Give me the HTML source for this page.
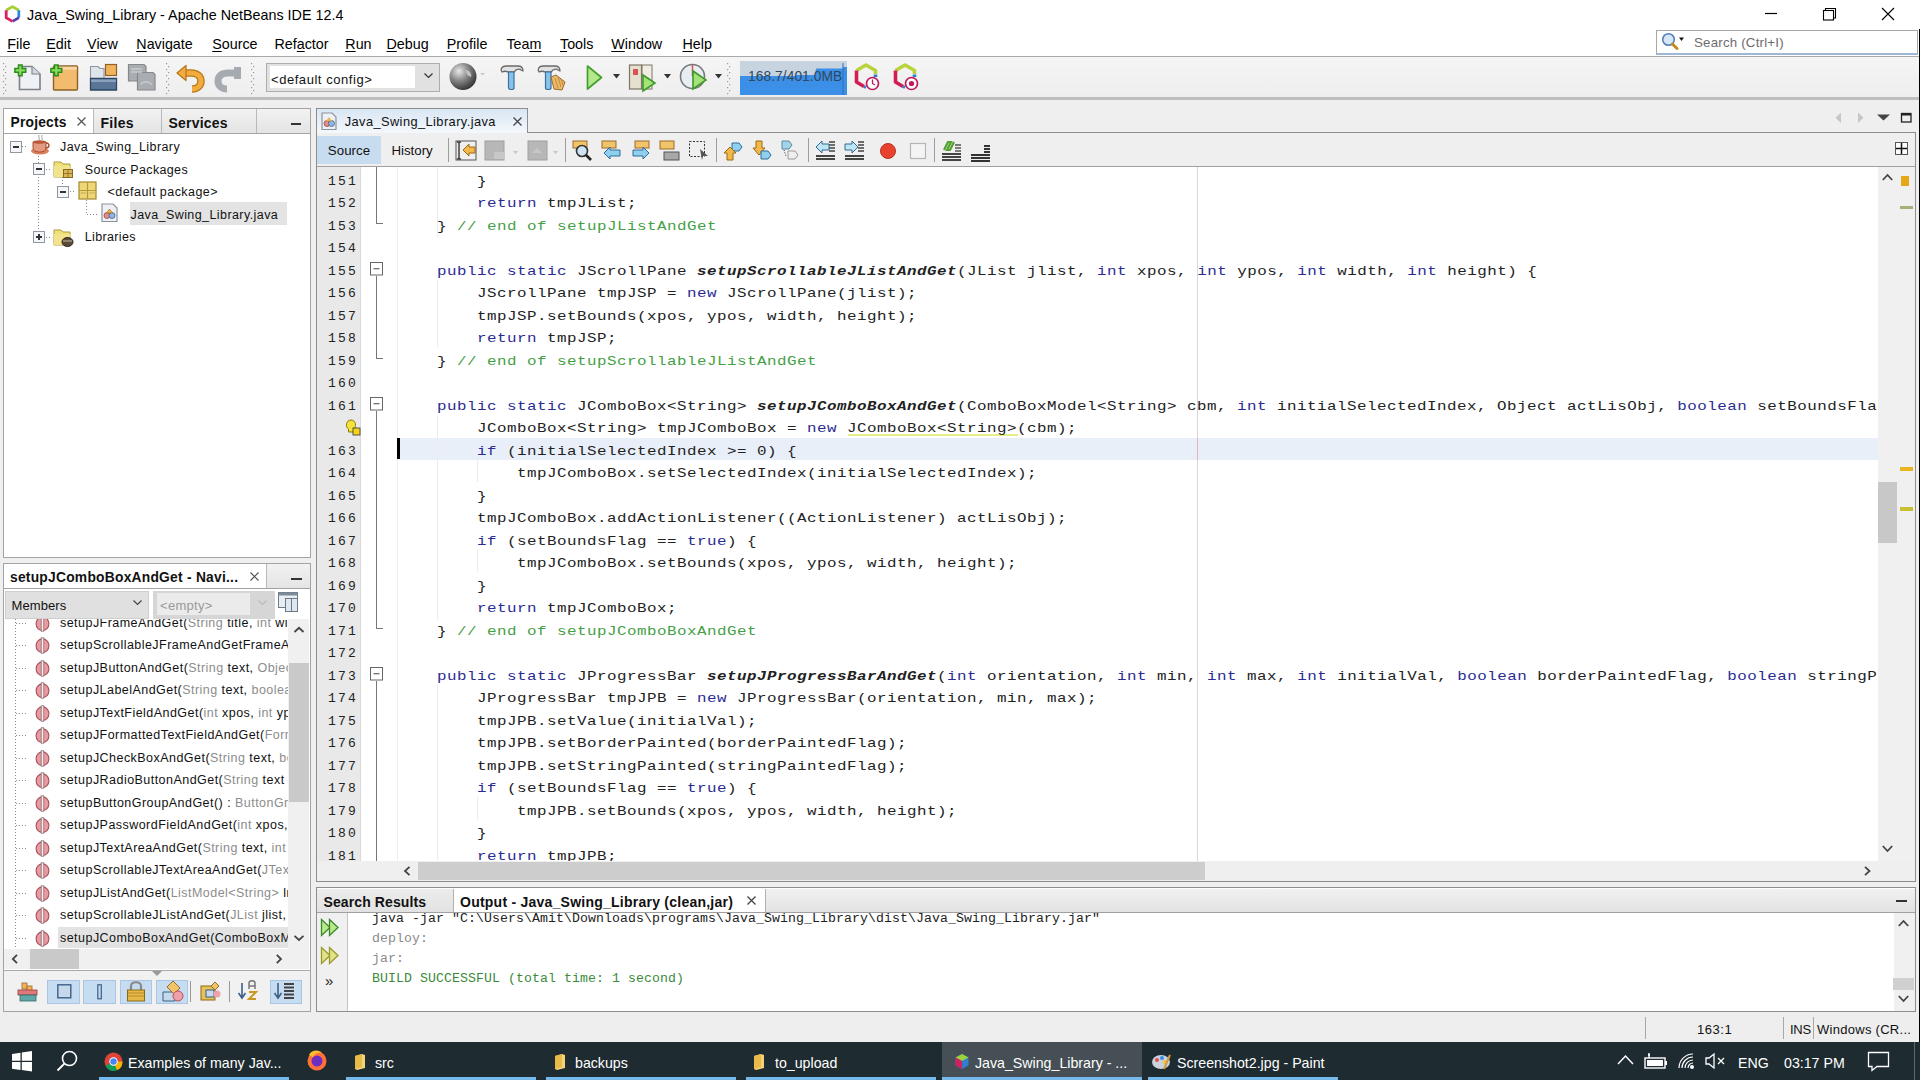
<!DOCTYPE html><html><head><meta charset="utf-8"><style>
*{margin:0;padding:0;box-sizing:border-box}
html,body{width:1920px;height:1080px;overflow:hidden;background:#efefef;position:relative;font-family:"Liberation Sans",sans-serif;}
.t{position:absolute;white-space:pre;line-height:1;}
.mono{font-family:"Liberation Mono",monospace;}
svg{position:absolute;overflow:visible}
u{text-decoration:underline;text-underline-offset:2px;text-decoration-thickness:1px}
.gr{color:#8c8c8c}
</style></head><body><div style="position:absolute;left:0px;top:0px;width:1920px;height:56px;background:#fff"></div><div style="position:absolute;left:0px;top:56px;width:1920px;height:1px;background:#a9a9a9"></div><div class="t " style="left:27px;top:7.80px;font-size:14.3px;color:#000;letter-spacing:0.02px">Java_Swing_Library - Apache NetBeans IDE 12.4</div><svg style="left:0px;top:0px" width="1920" height="30"><line x1="1765" y1="13.5" x2="1777" y2="13.5" stroke="#000" stroke-width="1.2"/><rect x="1823.5" y="10.5" width="10" height="9.5" fill="none" stroke="#000" stroke-width="1.1"/><path d="M1825.5 10.5 V8.5 H1835.5 V18 H1833.5" fill="none" stroke="#000" stroke-width="1.1"/><path d="M1882 8 L1894 20 M1894 8 L1882 20" stroke="#000" stroke-width="1.1"/></svg><svg style="left:4px;top:5px" width="17" height="18"><path d="M2.2 5.2 L8.5 1.6 L14.8 5.2" stroke="#a5cf2a" stroke-width="2.8" fill="none" stroke-linejoin="round"/><path d="M14.8 5.2 L14.8 12.8" stroke="#2a8ae0" stroke-width="2.8" fill="none"/><path d="M14.8 12.8 L8.5 16.4" stroke="#5a3fb0" stroke-width="2.8" fill="none"/><path d="M8.5 16.4 L2.2 12.8 L2.2 5.2" stroke="#d9245e" stroke-width="2.8" fill="none" stroke-linejoin="round"/></svg><div class="t " style="left:7.3px;top:37.30px;font-size:14.3px;color:#000"><u>F</u>ile</div><div class="t " style="left:46.3px;top:37.30px;font-size:14.3px;color:#000"><u>E</u>dit</div><div class="t " style="left:87.1px;top:37.30px;font-size:14.3px;color:#000"><u>V</u>iew</div><div class="t " style="left:136.3px;top:37.30px;font-size:14.3px;color:#000"><u>N</u>avigate</div><div class="t " style="left:212.2px;top:37.30px;font-size:14.3px;color:#000"><u>S</u>ource</div><div class="t " style="left:274.5px;top:37.30px;font-size:14.3px;color:#000">Ref<u>a</u>ctor</div><div class="t " style="left:345.3px;top:37.30px;font-size:14.3px;color:#000"><u>R</u>un</div><div class="t " style="left:386.5px;top:37.30px;font-size:14.3px;color:#000"><u>D</u>ebug</div><div class="t " style="left:446.8px;top:37.30px;font-size:14.3px;color:#000"><u>P</u>rofile</div><div class="t " style="left:506.4px;top:37.30px;font-size:14.3px;color:#000">Tea<u>m</u></div><div class="t " style="left:560px;top:37.30px;font-size:14.3px;color:#000"><u>T</u>ools</div><div class="t " style="left:611.3px;top:37.30px;font-size:14.3px;color:#000"><u>W</u>indow</div><div class="t " style="left:682.5px;top:37.30px;font-size:14.3px;color:#000"><u>H</u>elp</div><div style="position:absolute;left:1656px;top:30px;width:262px;height:24.5px;background:#fff;border:1px solid #a8a8a8;border-bottom:2px solid #9fb8d6"></div><div class="t " style="left:1694px;top:36.44px;font-size:13.3px;color:#6d6d6d;letter-spacing:0.2px">Search (Ctrl+I)</div><svg style="left:1660px;top:32px" width="26" height="20"><circle cx="8.5" cy="7.5" r="5.8" fill="#d4e6f7" stroke="#4f7fb0" stroke-width="1.5"/><path d="M12.5 12 L17 16.5" stroke="#c98a1a" stroke-width="3" stroke-linecap="round"/><path d="M19 5.5 L24 5.5 L21.5 9 Z" fill="#111"/></svg><div style="position:absolute;left:0px;top:57px;width:1920px;height:40px;background:linear-gradient(#f5f5f5,#eeeeee)"></div><div style="position:absolute;left:0px;top:97px;width:1920px;height:3px;background:#bdbdbd"></div><svg style="left:3px;top:63px" width="4" height="34"><rect x="0" y="0" width="1.2" height="1.2" fill="#9a9a9a"/><rect x="2" y="3" width="1.2" height="1.2" fill="#9a9a9a"/><rect x="0" y="6" width="1.2" height="1.2" fill="#9a9a9a"/><rect x="2" y="9" width="1.2" height="1.2" fill="#9a9a9a"/><rect x="0" y="12" width="1.2" height="1.2" fill="#9a9a9a"/><rect x="2" y="15" width="1.2" height="1.2" fill="#9a9a9a"/><rect x="0" y="18" width="1.2" height="1.2" fill="#9a9a9a"/><rect x="2" y="21" width="1.2" height="1.2" fill="#9a9a9a"/><rect x="0" y="24" width="1.2" height="1.2" fill="#9a9a9a"/><rect x="2" y="27" width="1.2" height="1.2" fill="#9a9a9a"/><rect x="0" y="30" width="1.2" height="1.2" fill="#9a9a9a"/></svg><svg style="left:166px;top:63px" width="4" height="34"><rect x="0" y="0" width="1.2" height="1.2" fill="#9a9a9a"/><rect x="2" y="3" width="1.2" height="1.2" fill="#9a9a9a"/><rect x="0" y="6" width="1.2" height="1.2" fill="#9a9a9a"/><rect x="2" y="9" width="1.2" height="1.2" fill="#9a9a9a"/><rect x="0" y="12" width="1.2" height="1.2" fill="#9a9a9a"/><rect x="2" y="15" width="1.2" height="1.2" fill="#9a9a9a"/><rect x="0" y="18" width="1.2" height="1.2" fill="#9a9a9a"/><rect x="2" y="21" width="1.2" height="1.2" fill="#9a9a9a"/><rect x="0" y="24" width="1.2" height="1.2" fill="#9a9a9a"/><rect x="2" y="27" width="1.2" height="1.2" fill="#9a9a9a"/><rect x="0" y="30" width="1.2" height="1.2" fill="#9a9a9a"/></svg><svg style="left:251px;top:63px" width="4" height="34"><rect x="0" y="0" width="1.2" height="1.2" fill="#9a9a9a"/><rect x="2" y="3" width="1.2" height="1.2" fill="#9a9a9a"/><rect x="0" y="6" width="1.2" height="1.2" fill="#9a9a9a"/><rect x="2" y="9" width="1.2" height="1.2" fill="#9a9a9a"/><rect x="0" y="12" width="1.2" height="1.2" fill="#9a9a9a"/><rect x="2" y="15" width="1.2" height="1.2" fill="#9a9a9a"/><rect x="0" y="18" width="1.2" height="1.2" fill="#9a9a9a"/><rect x="2" y="21" width="1.2" height="1.2" fill="#9a9a9a"/><rect x="0" y="24" width="1.2" height="1.2" fill="#9a9a9a"/><rect x="2" y="27" width="1.2" height="1.2" fill="#9a9a9a"/><rect x="0" y="30" width="1.2" height="1.2" fill="#9a9a9a"/></svg><svg style="left:727px;top:63px" width="4" height="34"><rect x="0" y="0" width="1.2" height="1.2" fill="#9a9a9a"/><rect x="2" y="3" width="1.2" height="1.2" fill="#9a9a9a"/><rect x="0" y="6" width="1.2" height="1.2" fill="#9a9a9a"/><rect x="2" y="9" width="1.2" height="1.2" fill="#9a9a9a"/><rect x="0" y="12" width="1.2" height="1.2" fill="#9a9a9a"/><rect x="2" y="15" width="1.2" height="1.2" fill="#9a9a9a"/><rect x="0" y="18" width="1.2" height="1.2" fill="#9a9a9a"/><rect x="2" y="21" width="1.2" height="1.2" fill="#9a9a9a"/><rect x="0" y="24" width="1.2" height="1.2" fill="#9a9a9a"/><rect x="2" y="27" width="1.2" height="1.2" fill="#9a9a9a"/><rect x="0" y="30" width="1.2" height="1.2" fill="#9a9a9a"/></svg><svg style="left:14px;top:63px" width="30" height="30"><path d="M5.5 3.5 H18 L26 11 V26.5 H5.5 Z" fill="#eef1f6" stroke="#7d8087" stroke-width="1.6"/><path d="M18 3.5 V11 H26" fill="#d3d9e2" stroke="#7d8087" stroke-width="1.1"/><path d="M4.5 2 h3.6 v3.6 h3.6 v3.6 h-3.6 v3.6 h-3.6 v-3.6 h-3.6 v-3.6 h3.6 z" fill="#86e060" stroke="#2f8a1c" stroke-width="1.5"/></svg><svg style="left:50px;top:63px" width="32" height="30"><rect x="3.5" y="3" width="24" height="24" rx="1" fill="#f2bb6e" stroke="#8f6128" stroke-width="1.4"/><rect x="4.2" y="3.7" width="22.6" height="3" fill="#f8d6a4"/><path d="M4.5 2 h3.6 v3.6 h3.6 v3.6 h-3.6 v3.6 h-3.6 v-3.6 h-3.6 v-3.6 h3.6 z" fill="#86e060" stroke="#2f8a1c" stroke-width="1.5"/></svg><svg style="left:89px;top:63px" width="30" height="30"><path d="M1.5 3.5 H9 L11 5.5 H15 V16 H1.5 Z" fill="#dfe4ea" stroke="#8a96a6" stroke-width="1.1"/><rect x="16.5" y="1.5" width="11" height="11" fill="#f2b35d" stroke="#8f6128" stroke-width="1.2"/><path d="M1.5 15.5 H27.5 V27 H1.5 Z" fill="#5a7696" stroke="#2e4660" stroke-width="1.3"/><path d="M2 16.5 H27 V19 H2Z" fill="#8aa2bc"/></svg><svg style="left:127px;top:63px" width="30" height="30"><path d="M1.5 1.5 H17 L19 3.5 V18 H1.5 Z" fill="#a9acb0" stroke="#85888c" stroke-width="1.2"/><path d="M10.5 9.5 H26 L28 11.5 V27 H10.5 Z" fill="#a9acb0" stroke="#85888c" stroke-width="1.2"/><path d="M4 6 H15 M4 9 H15" stroke="#c9cbce" stroke-width="1.3"/><path d="M14 22 C14 18 24 18 24 22" stroke="#c9cbce" stroke-width="1.5" fill="none"/></svg><svg style="left:176px;top:63px" width="30" height="30"><path d="M7 10 H15 C21 10 25 13 25 18 C25 23 21 26 16 26" fill="none" stroke="#b8781a" stroke-width="7.5"/><path d="M7 10 H15 C21 10 25 13 25 18 C25 23 21 26 16 26" fill="none" stroke="#f2ac3e" stroke-width="5"/><path d="M1 10 L10 2.5 V17.5 Z" fill="#f2ac3e" stroke="#b8781a" stroke-width="1.3" stroke-linejoin="round"/></svg><svg style="left:214px;top:63px" width="30" height="30"><path d="M21 10 H14 C8 10 4 13 4 18 C4 23 8 26 13 26" fill="none" stroke="#a5abb1" stroke-width="7"/><path d="M20 4 H27 V16 L20 16 Z" fill="#a5abb1"/></svg><div style="position:absolute;left:266px;top:63px;width:174px;height:29px;background:#e1e1e1;border:1px solid #adadad"></div><div style="position:absolute;left:270px;top:66px;width:145px;height:22px;background:#fff"></div><div class="t " style="left:271px;top:72.50px;font-size:13px;color:#111;letter-spacing:0.55px">&lt;default config&gt;</div><svg style="left:424px;top:73px" width="10" height="6"><path d="M0.5 0.5 L4.5 4.5 L8.5 0.5" fill="none" stroke="#333" stroke-width="1.2"/></svg><svg style="left:449px;top:62px" width="36" height="32"><defs><radialGradient id="gl" cx="35%" cy="30%" r="70%"><stop offset="0" stop-color="#e8e8e8"/><stop offset="0.5" stop-color="#8a8a8a"/><stop offset="1" stop-color="#3a3a3a"/></radialGradient></defs><circle cx="14" cy="14.5" r="13.5" fill="url(#gl)"/><path d="M17 8 C21 9 23 12 22 15 C19 14 17 12 17 8Z" fill="#cfcfcf" opacity="0.8"/><path d="M31 11 L36 11 L33.5 13.5 Z" fill="#c8c8c8"/></svg><svg style="left:499px;top:63px" width="26" height="29"><path d="M3 9 C1 6 3 3 7 3 L19 3 C22 3 24 5 24 8 L22 7 C21 6 19 6 17 7 L15 9 L9 9 C7 8 5 8 3 9 Z" fill="#e2e2e2" stroke="#6a6a6a" stroke-width="1.3" stroke-linejoin="round"/><path d="M9.5 9 H15 V25 C15 27 9.5 27 9.5 25 Z" fill="#86c3ec" stroke="#3d6f9a" stroke-width="1.2"/></svg><svg style="left:536px;top:63px" width="32" height="30"><path d="M3 9 C1 6 3 3 7 3 L19 3 C22 3 24 5 24 8 L22 7 C21 6 19 6 17 7 L15 9 L9 9 C7 8 5 8 3 9 Z" fill="#e2e2e2" stroke="#6a6a6a" stroke-width="1.3" stroke-linejoin="round"/><path d="M9.5 9 H15 V25 C15 27 9.5 27 9.5 25 Z" fill="#86c3ec" stroke="#3d6f9a" stroke-width="1.2"/><path d="M15 14 L20 12 L29 19 L26 27 L18 26 Z" fill="#eeb86a" stroke="#9a6a2b" stroke-width="1"/><path d="M19 15 L22 25 M22 14 L25 24 M25 16 L27 22" stroke="#b8863a" stroke-width="0.9"/></svg><svg style="left:585px;top:64px" width="20" height="28"><path d="M2.5 2 L16.5 13.5 L2.5 25 Z" fill="#b2e88a" stroke="#43a02e" stroke-width="1.7" stroke-linejoin="round"/></svg><svg style="left:613px;top:74px" width="8" height="6"><path d="M0 0 H7 L3.5 4.5 Z" fill="#333"/></svg><svg style="left:664px;top:74px" width="8" height="6"><path d="M0 0 H7 L3.5 4.5 Z" fill="#333"/></svg><svg style="left:715px;top:74px" width="8" height="6"><path d="M0 0 H7 L3.5 4.5 Z" fill="#333"/></svg><svg style="left:628px;top:63px" width="32" height="30"><rect x="1.5" y="2" width="12" height="24" fill="#e5e0cf" stroke="#7c7666" stroke-width="1.2"/><rect x="14" y="2" width="10" height="24" fill="#f0ece2" stroke="#7c7666" stroke-width="1"/><rect x="5" y="6" width="5" height="6" fill="#d9534f"/><path d="M15 12 L27 20 L15 28 Z" fill="#a6e27a" stroke="#3e9a2a" stroke-width="1.6"/></svg><svg style="left:679px;top:62px" width="32" height="32"><circle cx="13.5" cy="14.5" r="12" fill="#e6eef4" stroke="#777" stroke-width="1.6"/><line x1="13.5" y1="3" x2="13.5" y2="14" stroke="#d9534f" stroke-width="1.5"/><path d="M14 9 L27 18 L14 27 Z" fill="#a6e27a" stroke="#3e9a2a" stroke-width="1.6"/></svg><svg style="left:740px;top:61px" width="108" height="35"><rect x="0" y="0" width="107" height="34" fill="#c7d4e0"/><path d="M0 15 L55 15 L56 14 L75 14 L76 7.5 L103 7.5 L103 34 L0 34 Z" fill="#3b8fe6"/><rect x="103" y="6" width="4" height="28" fill="#3b8fe6"/><rect x="102.5" y="2" width="1" height="32" fill="#2a6fb8"/></svg><div class="t " style="left:748px;top:70.02px;font-size:13.8px;color:#2f4860;letter-spacing:0.05px">168.7/401.0MB</div><svg style="left:852px;top:62px" width="30" height="30"><path d="M4.5 8.5 L14 3 L23.5 8.5 L23.5 12" fill="none" stroke="#b9d43a" stroke-width="3.6" stroke-linejoin="round"/><path d="M4.5 8.5 L4.5 20 L12 24.5" fill="none" stroke="#cf1f55" stroke-width="3.6" stroke-linejoin="round"/><path d="M23.5 12.5 L23.5 15" stroke="#2a7fd4" stroke-width="3.6"/><path d="M12 24.5 L14 25.5" stroke="#2a7fd4" stroke-width="3"/><circle cx="20.5" cy="21.5" r="6" fill="#fff" stroke="#c2185b" stroke-width="1.7"/><path d="M20.5 17.5 V21.5 L23 23" stroke="#c2185b" stroke-width="1.3" fill="none"/></svg><svg style="left:891px;top:62px" width="30" height="30"><path d="M4.5 8.5 L14 3 L23.5 8.5 L23.5 12" fill="none" stroke="#b9d43a" stroke-width="3.6" stroke-linejoin="round"/><path d="M4.5 8.5 L4.5 20 L12 24.5" fill="none" stroke="#cf1f55" stroke-width="3.6" stroke-linejoin="round"/><path d="M23.5 12.5 L23.5 15" stroke="#2a7fd4" stroke-width="3.6"/><path d="M12 24.5 L14 25.5" stroke="#2a7fd4" stroke-width="3"/><circle cx="20.5" cy="21.5" r="6" fill="#fff" stroke="#c2185b" stroke-width="1.7"/><circle cx="20.5" cy="21.5" r="2.6" fill="#c2185b"/></svg><div style="position:absolute;left:0px;top:100px;width:1920px;height:912px;background:#efefef"></div><div style="position:absolute;left:3px;top:108px;width:308px;height:450px;background:#fff;border:1px solid #a3a3a3"></div><div style="position:absolute;left:4px;top:109px;width:306px;height:24px;background:linear-gradient(#f2f2f2,#e4e4e4)"></div><div style="position:absolute;left:4px;top:109px;width:89px;height:24px;background:#fff"></div><div style="position:absolute;left:3px;top:133px;width:308px;height:1px;background:#a3a3a3"></div><div style="position:absolute;left:93px;top:109px;width:1px;height:24px;background:#b9b9b9"></div><div style="position:absolute;left:161px;top:109px;width:1px;height:24px;background:#b9b9b9"></div><div style="position:absolute;left:256px;top:109px;width:1px;height:24px;background:#b9b9b9"></div><div class="t " style="left:10.6px;top:115.72px;font-size:13.8px;font-weight:bold;color:#111;letter-spacing:0.2px">Projects</div><div class="t " style="left:100.5px;top:115.55px;font-size:14px;font-weight:bold;color:#111;letter-spacing:0.3px">Files</div><div class="t " style="left:168.5px;top:115.55px;font-size:14px;font-weight:bold;color:#111;letter-spacing:0.2px">Services</div><svg style="left:77px;top:117px" width="10" height="10"><path d="M0.5 0.5 L8.5 8.5 M8.5 0.5 L0.5 8.5" stroke="#555" stroke-width="1.2"/></svg><div style="position:absolute;left:291px;top:122.5px;width:10px;height:2px;background:#333"></div><div style="position:absolute;left:38px;top:153px;width:1px;height:78px;background:repeating-linear-gradient(180deg,#8a8a8a 0 1px,transparent 1px 3px)"></div><div style="position:absolute;left:62px;top:177px;width:1px;height:9px;background:repeating-linear-gradient(180deg,#8a8a8a 0 1px,transparent 1px 3px)"></div><div style="position:absolute;left:86px;top:200px;width:1px;height:14px;background:repeating-linear-gradient(180deg,#8a8a8a 0 1px,transparent 1px 3px)"></div><div style="position:absolute;left:87px;top:214px;width:12px;height:1px;background:repeating-linear-gradient(90deg,#8a8a8a 0 1px,transparent 1px 3px)"></div><div style="position:absolute;left:22px;top:146px;width:6px;height:1px;background:repeating-linear-gradient(90deg,#8a8a8a 0 1px,transparent 1px 3px)"></div><div style="position:absolute;left:46px;top:169px;width:6px;height:1px;background:repeating-linear-gradient(90deg,#8a8a8a 0 1px,transparent 1px 3px)"></div><div style="position:absolute;left:70px;top:191px;width:6px;height:1px;background:repeating-linear-gradient(90deg,#8a8a8a 0 1px,transparent 1px 3px)"></div><div style="position:absolute;left:46px;top:237px;width:6px;height:1px;background:repeating-linear-gradient(90deg,#8a8a8a 0 1px,transparent 1px 3px)"></div><svg style="left:10px;top:141px" width="12" height="12"><rect x="0.5" y="0.5" width="11" height="11" fill="#f4f6f9" stroke="#8f96a0"/><rect x="3" y="5" width="6" height="2" fill="#333"/></svg><svg style="left:33px;top:163px" width="12" height="12"><rect x="0.5" y="0.5" width="11" height="11" fill="#f4f6f9" stroke="#8f96a0"/><rect x="3" y="5" width="6" height="2" fill="#333"/></svg><svg style="left:57px;top:185.5px" width="12" height="12"><rect x="0.5" y="0.5" width="11" height="11" fill="#f4f6f9" stroke="#8f96a0"/><rect x="3" y="5" width="6" height="2" fill="#333"/></svg><svg style="left:33px;top:231px" width="12" height="12"><rect x="0.5" y="0.5" width="11" height="11" fill="#f4f6f9" stroke="#8f96a0"/><rect x="3" y="5" width="6" height="2" fill="#333"/><rect x="5" y="3" width="2" height="6" fill="#333"/></svg><svg style="left:30px;top:134px" width="22" height="22"><path d="M9 1 C8 3 10 4 9 6 M12 1 C11 3 13 4 12 6" stroke="#9a9a9a" stroke-width="1" fill="none"/><ellipse cx="10" cy="17" rx="9" ry="3.5" fill="#d9805f"/><path d="M3 8 H16 V13 C16 17 13 18 9.5 18 C6 18 3 17 3 13 Z" fill="#e49a7f" stroke="#a8492a" stroke-width="1"/><ellipse cx="9.5" cy="8" rx="6.5" ry="1.8" fill="#b85a3a"/><path d="M16 9 C20 9 20 14 15.5 14" stroke="#a8492a" stroke-width="1.4" fill="none"/></svg><svg style="left:53px;top:160px" width="22" height="20"><path d="M1 2 H8 L10 4 H17 V17 H1 Z" fill="#efe07a" stroke="#b09a3a" stroke-width="1"/><rect x="1" y="6" width="16" height="11" fill="#f2e38c"/><rect x="10.5" y="9.5" width="9" height="8" fill="#d9b65a" stroke="#8a6a22" stroke-width="1"/><path d="M15 10 V17 M11 13.5 H19" stroke="#8a6a22" stroke-width="0.8"/></svg><svg style="left:78px;top:181px" width="20" height="19"><rect x="1" y="1" width="17" height="17" fill="#f0d678" stroke="#9f8a2e" stroke-width="1.2"/><path d="M9.5 1 V18 M1 9.5 H18" stroke="#b39a3a" stroke-width="1.2"/><rect x="2.5" y="11" width="5.5" height="2" fill="#d8c066"/><rect x="11" y="11" width="5.5" height="2" fill="#d8c066"/></svg><svg style="left:101px;top:203px" width="18" height="20"><path d="M1 1 H12 L16 5 V18.5 H1 Z" fill="#eef0f5" stroke="#8d939c" stroke-width="1.2"/><circle cx="6" cy="12.5" r="3" fill="#e88b8b" stroke="#8b4a4a" stroke-width="0.8"/><circle cx="11" cy="12.5" r="3" fill="#8fb6e3" stroke="#3d5f88" stroke-width="0.8"/><path d="M8.5 6 L11.5 10 H5.5 Z" fill="#f0b34a" stroke="#9a6a12" stroke-width="0.6"/></svg><svg style="left:53px;top:228px" width="22" height="20"><path d="M1 2 H8 L10 4 H17 V17 H1 Z" fill="#efe07a" stroke="#b09a3a" stroke-width="1"/><rect x="1" y="6" width="16" height="11" fill="#f2e38c"/><ellipse cx="14.5" cy="14" rx="5.5" ry="4.5" fill="#5a4a3a" stroke="#2a2018"/><path d="M10 13 H19" stroke="#c8b8a0" stroke-width="1"/></svg><div style="position:absolute;left:130px;top:202px;width:157px;height:22.7px;background:#e3e3e3"></div><div class="t " style="left:60px;top:141.42px;font-size:12.5px;color:#111;letter-spacing:0.42px">Java_Swing_Library</div><div class="t " style="left:84.8px;top:164.12px;font-size:12.5px;color:#111;letter-spacing:0.35px">Source Packages</div><div class="t " style="left:107.5px;top:186.22px;font-size:12.5px;color:#111;letter-spacing:0.45px">&lt;default package&gt;</div><div class="t " style="left:130.5px;top:208.72px;font-size:12.5px;color:#111;letter-spacing:0.42px">Java_Swing_Library.java</div><div class="t " style="left:84.8px;top:231.22px;font-size:12.5px;color:#111;letter-spacing:0.35px">Libraries</div><div style="position:absolute;left:3px;top:563px;width:308px;height:449px;background:#fff;border:1px solid #a3a3a3"></div><div style="position:absolute;left:4px;top:564px;width:306px;height:24px;background:linear-gradient(#f2f2f2,#e4e4e4)"></div><div style="position:absolute;left:4px;top:564px;width:262px;height:24px;background:#fff"></div><div style="position:absolute;left:3px;top:588px;width:308px;height:1px;background:#a3a3a3"></div><div style="position:absolute;left:266px;top:564px;width:1px;height:24px;background:#b9b9b9"></div><div class="t " style="left:10px;top:570.82px;font-size:13.8px;font-weight:bold;color:#111;letter-spacing:0.25px">setupJComboBoxAndGet - Navi...</div><svg style="left:250px;top:572px" width="10" height="10"><path d="M0.5 0.5 L8.5 8.5 M8.5 0.5 L0.5 8.5" stroke="#555" stroke-width="1.2"/></svg><div style="position:absolute;left:291px;top:578px;width:11px;height:2px;background:#333"></div><div style="position:absolute;left:4px;top:619px;width:284px;height:330px;overflow:hidden"><div style="position:absolute;left:11px;top:0px;width:1px;height:330px;background:repeating-linear-gradient(180deg,#8a8a8a 0 1px,transparent 1px 3px)"></div><div style="position:absolute;left:12px;top:3.5px;width:11px;height:1px;background:repeating-linear-gradient(90deg,#8a8a8a 0 1px,transparent 1px 3px)"></div><svg style="left:31px;top:-4.5px" width="16" height="17"><ellipse cx="7.5" cy="8.7" rx="6.4" ry="6.8" fill="#e99aa2" stroke="#a8505a" stroke-width="1.1"/><rect x="6.2" y="0.8" width="2.6" height="15.4" fill="#fbeef0" stroke="#8a6a6e" stroke-width="0.8"/></svg><div class="t" style="left:56px;top:-2.28px;font-size:12.5px;letter-spacing:0.46px;color:#111">setupJFrameAndGet(<span class="gr">String</span> title, <span class="gr">int</span> width, int height</div><div style="position:absolute;left:12px;top:26.0px;width:11px;height:1px;background:repeating-linear-gradient(90deg,#8a8a8a 0 1px,transparent 1px 3px)"></div><svg style="left:31px;top:18.0px" width="16" height="17"><ellipse cx="7.5" cy="8.7" rx="6.4" ry="6.8" fill="#e99aa2" stroke="#a8505a" stroke-width="1.1"/><rect x="6.2" y="0.8" width="2.6" height="15.4" fill="#fbeef0" stroke="#8a6a6e" stroke-width="0.8"/></svg><div class="t" style="left:56px;top:20.22px;font-size:12.5px;letter-spacing:0.46px;color:#111">setupScrollableJFrameAndGetFrameAndGet</div><div style="position:absolute;left:12px;top:48.5px;width:11px;height:1px;background:repeating-linear-gradient(90deg,#8a8a8a 0 1px,transparent 1px 3px)"></div><svg style="left:31px;top:40.5px" width="16" height="17"><ellipse cx="7.5" cy="8.7" rx="6.4" ry="6.8" fill="#e99aa2" stroke="#a8505a" stroke-width="1.1"/><rect x="6.2" y="0.8" width="2.6" height="15.4" fill="#fbeef0" stroke="#8a6a6e" stroke-width="0.8"/></svg><div class="t" style="left:56px;top:42.72px;font-size:12.5px;letter-spacing:0.46px;color:#111">setupJButtonAndGet(<span class="gr">String</span> text, <span class="gr">Object</span> actLisObj</div><div style="position:absolute;left:12px;top:71.0px;width:11px;height:1px;background:repeating-linear-gradient(90deg,#8a8a8a 0 1px,transparent 1px 3px)"></div><svg style="left:31px;top:63.0px" width="16" height="17"><ellipse cx="7.5" cy="8.7" rx="6.4" ry="6.8" fill="#e99aa2" stroke="#a8505a" stroke-width="1.1"/><rect x="6.2" y="0.8" width="2.6" height="15.4" fill="#fbeef0" stroke="#8a6a6e" stroke-width="0.8"/></svg><div class="t" style="left:56px;top:65.22px;font-size:12.5px;letter-spacing:0.46px;color:#111">setupJLabelAndGet(<span class="gr">String</span> text, <span class="gr">boolean</span> flag</div><div style="position:absolute;left:12px;top:93.5px;width:11px;height:1px;background:repeating-linear-gradient(90deg,#8a8a8a 0 1px,transparent 1px 3px)"></div><svg style="left:31px;top:85.5px" width="16" height="17"><ellipse cx="7.5" cy="8.7" rx="6.4" ry="6.8" fill="#e99aa2" stroke="#a8505a" stroke-width="1.1"/><rect x="6.2" y="0.8" width="2.6" height="15.4" fill="#fbeef0" stroke="#8a6a6e" stroke-width="0.8"/></svg><div class="t" style="left:56px;top:87.72px;font-size:12.5px;letter-spacing:0.46px;color:#111">setupJTextFieldAndGet(<span class="gr">int</span> xpos, <span class="gr">int</span> ypos</div><div style="position:absolute;left:12px;top:116.0px;width:11px;height:1px;background:repeating-linear-gradient(90deg,#8a8a8a 0 1px,transparent 1px 3px)"></div><svg style="left:31px;top:108.0px" width="16" height="17"><ellipse cx="7.5" cy="8.7" rx="6.4" ry="6.8" fill="#e99aa2" stroke="#a8505a" stroke-width="1.1"/><rect x="6.2" y="0.8" width="2.6" height="15.4" fill="#fbeef0" stroke="#8a6a6e" stroke-width="0.8"/></svg><div class="t" style="left:56px;top:110.22px;font-size:12.5px;letter-spacing:0.46px;color:#111">setupJFormattedTextFieldAndGet(<span class="gr">Format</span></div><div style="position:absolute;left:12px;top:138.5px;width:11px;height:1px;background:repeating-linear-gradient(90deg,#8a8a8a 0 1px,transparent 1px 3px)"></div><svg style="left:31px;top:130.5px" width="16" height="17"><ellipse cx="7.5" cy="8.7" rx="6.4" ry="6.8" fill="#e99aa2" stroke="#a8505a" stroke-width="1.1"/><rect x="6.2" y="0.8" width="2.6" height="15.4" fill="#fbeef0" stroke="#8a6a6e" stroke-width="0.8"/></svg><div class="t" style="left:56px;top:132.72px;font-size:12.5px;letter-spacing:0.46px;color:#111">setupJCheckBoxAndGet(<span class="gr">String</span> text, <span class="gr">boolean</span></div><div style="position:absolute;left:12px;top:161.0px;width:11px;height:1px;background:repeating-linear-gradient(90deg,#8a8a8a 0 1px,transparent 1px 3px)"></div><svg style="left:31px;top:153.0px" width="16" height="17"><ellipse cx="7.5" cy="8.7" rx="6.4" ry="6.8" fill="#e99aa2" stroke="#a8505a" stroke-width="1.1"/><rect x="6.2" y="0.8" width="2.6" height="15.4" fill="#fbeef0" stroke="#8a6a6e" stroke-width="0.8"/></svg><div class="t" style="left:56px;top:155.22px;font-size:12.5px;letter-spacing:0.46px;color:#111">setupJRadioButtonAndGet(<span class="gr">String</span> text</div><div style="position:absolute;left:12px;top:183.5px;width:11px;height:1px;background:repeating-linear-gradient(90deg,#8a8a8a 0 1px,transparent 1px 3px)"></div><svg style="left:31px;top:175.5px" width="16" height="17"><ellipse cx="7.5" cy="8.7" rx="6.4" ry="6.8" fill="#e99aa2" stroke="#a8505a" stroke-width="1.1"/><rect x="6.2" y="0.8" width="2.6" height="15.4" fill="#fbeef0" stroke="#8a6a6e" stroke-width="0.8"/></svg><div class="t" style="left:56px;top:177.72px;font-size:12.5px;letter-spacing:0.46px;color:#111">setupButtonGroupAndGet() : <span class="gr">ButtonGroup</span></div><div style="position:absolute;left:12px;top:206.0px;width:11px;height:1px;background:repeating-linear-gradient(90deg,#8a8a8a 0 1px,transparent 1px 3px)"></div><svg style="left:31px;top:198.0px" width="16" height="17"><ellipse cx="7.5" cy="8.7" rx="6.4" ry="6.8" fill="#e99aa2" stroke="#a8505a" stroke-width="1.1"/><rect x="6.2" y="0.8" width="2.6" height="15.4" fill="#fbeef0" stroke="#8a6a6e" stroke-width="0.8"/></svg><div class="t" style="left:56px;top:200.22px;font-size:12.5px;letter-spacing:0.46px;color:#111">setupJPasswordFieldAndGet(<span class="gr">int</span> xpos, </div><div style="position:absolute;left:12px;top:228.5px;width:11px;height:1px;background:repeating-linear-gradient(90deg,#8a8a8a 0 1px,transparent 1px 3px)"></div><svg style="left:31px;top:220.5px" width="16" height="17"><ellipse cx="7.5" cy="8.7" rx="6.4" ry="6.8" fill="#e99aa2" stroke="#a8505a" stroke-width="1.1"/><rect x="6.2" y="0.8" width="2.6" height="15.4" fill="#fbeef0" stroke="#8a6a6e" stroke-width="0.8"/></svg><div class="t" style="left:56px;top:222.72px;font-size:12.5px;letter-spacing:0.46px;color:#111">setupJTextAreaAndGet(<span class="gr">String</span> text, <span class="gr">int</span></div><div style="position:absolute;left:12px;top:251.0px;width:11px;height:1px;background:repeating-linear-gradient(90deg,#8a8a8a 0 1px,transparent 1px 3px)"></div><svg style="left:31px;top:243.0px" width="16" height="17"><ellipse cx="7.5" cy="8.7" rx="6.4" ry="6.8" fill="#e99aa2" stroke="#a8505a" stroke-width="1.1"/><rect x="6.2" y="0.8" width="2.6" height="15.4" fill="#fbeef0" stroke="#8a6a6e" stroke-width="0.8"/></svg><div class="t" style="left:56px;top:245.22px;font-size:12.5px;letter-spacing:0.46px;color:#111">setupScrollableJTextAreaAndGet(<span class="gr">JTextArea</span></div><div style="position:absolute;left:12px;top:273.5px;width:11px;height:1px;background:repeating-linear-gradient(90deg,#8a8a8a 0 1px,transparent 1px 3px)"></div><svg style="left:31px;top:265.5px" width="16" height="17"><ellipse cx="7.5" cy="8.7" rx="6.4" ry="6.8" fill="#e99aa2" stroke="#a8505a" stroke-width="1.1"/><rect x="6.2" y="0.8" width="2.6" height="15.4" fill="#fbeef0" stroke="#8a6a6e" stroke-width="0.8"/></svg><div class="t" style="left:56px;top:267.72px;font-size:12.5px;letter-spacing:0.46px;color:#111">setupJListAndGet(<span class="gr">ListModel&lt;String&gt;</span> lm</div><div style="position:absolute;left:12px;top:296.0px;width:11px;height:1px;background:repeating-linear-gradient(90deg,#8a8a8a 0 1px,transparent 1px 3px)"></div><svg style="left:31px;top:288.0px" width="16" height="17"><ellipse cx="7.5" cy="8.7" rx="6.4" ry="6.8" fill="#e99aa2" stroke="#a8505a" stroke-width="1.1"/><rect x="6.2" y="0.8" width="2.6" height="15.4" fill="#fbeef0" stroke="#8a6a6e" stroke-width="0.8"/></svg><div class="t" style="left:56px;top:290.22px;font-size:12.5px;letter-spacing:0.46px;color:#111">setupScrollableJListAndGet(<span class="gr">JList</span> jlist, <span class="gr">int</span></div><div style="position:absolute;left:54px;top:307.5px;width:236px;height:21px;background:#e3e3e3"></div><div style="position:absolute;left:12px;top:318.5px;width:11px;height:1px;background:repeating-linear-gradient(90deg,#8a8a8a 0 1px,transparent 1px 3px)"></div><svg style="left:31px;top:310.5px" width="16" height="17"><ellipse cx="7.5" cy="8.7" rx="6.4" ry="6.8" fill="#e99aa2" stroke="#a8505a" stroke-width="1.1"/><rect x="6.2" y="0.8" width="2.6" height="15.4" fill="#fbeef0" stroke="#8a6a6e" stroke-width="0.8"/></svg><div class="t" style="left:56px;top:312.72px;font-size:12.5px;letter-spacing:0.46px;color:#111">setupJComboBoxAndGet(ComboBoxModel</div></div><div style="position:absolute;left:5px;top:590.5px;width:144px;height:28.5px;background:#e0e0e0;border:1px solid #cfcfcf"></div><div class="t " style="left:11.5px;top:599.00px;font-size:13px;color:#111;letter-spacing:0.1px">Members</div><svg style="left:133px;top:600px" width="10" height="6"><path d="M0.5 0.5 L4.5 4.5 L8.5 0.5" fill="none" stroke="#444" stroke-width="1.2"/></svg><div style="position:absolute;left:153px;top:590.5px;width:122px;height:28.5px;background:#d6d6d6"></div><div style="position:absolute;left:157px;top:593px;width:93px;height:22px;background:#ebebeb"></div><div class="t " style="left:160px;top:599.00px;font-size:13px;color:#9a9a9a;letter-spacing:0.3px">&lt;empty&gt;</div><svg style="left:258px;top:600px" width="10" height="6"><path d="M0.5 0.5 L4.5 4.5 L8.5 0.5" fill="none" stroke="#bbb" stroke-width="1.2"/></svg><svg style="left:278px;top:592px" width="22" height="21"><rect x="0.5" y="0.5" width="19" height="15" fill="#e9eef3" stroke="#6c7a88" stroke-width="1"/><rect x="0.5" y="0.5" width="19" height="3" fill="#7d8b98"/><rect x="7.5" y="6.5" width="12" height="13" fill="#dfe8f0" stroke="#6c7a88" stroke-width="1"/><path d="M13.5 7 V19" stroke="#6c7a88"/></svg><div style="position:absolute;left:288px;top:619px;width:21px;height:330px;background:#f0f0f0"></div><div style="position:absolute;left:289px;top:663px;width:20px;height:139px;background:#c9c9c9"></div><svg style="left:294px;top:627px" width="10" height="6"><path d="M0.5 5 L5 0.8 L9.5 5" fill="none" stroke="#444" stroke-width="1.8"/></svg><svg style="left:294px;top:935px" width="10" height="6"><path d="M0.5 0.8 L5 5 L9.5 0.8" fill="none" stroke="#444" stroke-width="1.8"/></svg><div style="position:absolute;left:4px;top:949px;width:284px;height:20px;background:#f0f0f0"></div><div style="position:absolute;left:30px;top:949px;width:49px;height:20px;background:#c9c9c9"></div><svg style="left:12px;top:954px" width="6" height="10"><path d="M5 0.8 L0.8 5 L5 9.2" fill="none" stroke="#444" stroke-width="1.8"/></svg><svg style="left:276px;top:954px" width="6" height="10"><path d="M0.8 0.8 L5 5 L0.8 9.2" fill="none" stroke="#444" stroke-width="1.8"/></svg><div style="position:absolute;left:288px;top:949px;width:21px;height:20px;background:#f0f0f0"></div><div style="position:absolute;left:4px;top:970px;width:306px;height:41px;background:#f1f1f1"></div><div style="position:absolute;left:4px;top:970px;width:306px;height:1px;background:#a9a9a9"></div><svg style="left:152px;top:971px" width="11" height="6"><path d="M0 0 H10 L5 5 Z" fill="#9a9a9a"/></svg><div style="position:absolute;left:47px;top:980px;width:33px;height:23.5px;background:#c6dcf1;border:1px solid #a9c6e4"></div><div style="position:absolute;left:83px;top:980px;width:33px;height:23.5px;background:#c6dcf1;border:1px solid #a9c6e4"></div><div style="position:absolute;left:120px;top:980px;width:32px;height:23.5px;background:#c6dcf1;border:1px solid #a9c6e4"></div><div style="position:absolute;left:156px;top:980px;width:32px;height:23.5px;background:#c6dcf1;border:1px solid #a9c6e4"></div><div style="position:absolute;left:270px;top:980px;width:32px;height:23.5px;background:#c6dcf1;border:1px solid #a9c6e4"></div><div style="position:absolute;left:190px;top:981px;width:1px;height:21px;background:#999"></div><div style="position:absolute;left:229px;top:981px;width:1px;height:21px;background:#999"></div><svg style="left:17px;top:981px" width="22" height="22"><rect x="5" y="2" width="5" height="6" fill="#f2b35d" stroke="#9a6a2b" stroke-width="0.8"/><rect x="10" y="5" width="5" height="6" fill="#f2b35d" stroke="#9a6a2b" stroke-width="0.8"/><rect x="1" y="9" width="19" height="5" fill="#e07a7a" stroke="#9a3a3a" stroke-width="0.8"/><rect x="3" y="14" width="16" height="6" fill="#5fa8a8" stroke="#2e6a6a" stroke-width="0.8"/></svg><svg style="left:57px;top:984px" width="16" height="16"><rect x="0.8" y="0.8" width="13" height="13" fill="#c5d8ec" stroke="#3d5f88" stroke-width="1.4"/></svg><svg style="left:97px;top:984px" width="6" height="17"><rect x="0.8" y="0.8" width="3.5" height="14" fill="#c5d8ec" stroke="#3d5f88" stroke-width="1.2"/></svg><svg style="left:126px;top:980px" width="20" height="22"><path d="M5 10 V6 C5 1 15 1 15 6 V10" fill="none" stroke="#8a8a8a" stroke-width="2.2"/><rect x="1.5" y="10" width="17" height="11" fill="#e6b84a" stroke="#8a6a12" stroke-width="1"/><path d="M2 13 H18 M2 16 H18" stroke="#b98a22" stroke-width="1"/></svg><svg style="left:161px;top:980px" width="24" height="22"><path d="M2 12 L14 12 L14 21 L2 21 Z" fill="#c5d8ec" stroke="#3d5f88"/><path d="M6 7 L12 1 L19 8 L13 14 Z" fill="#f2c46a" stroke="#9a6a2b"/><circle cx="17" cy="16" r="5" fill="#f0a0a8" stroke="#b44e58"/></svg><svg style="left:200px;top:981px" width="22" height="20"><rect x="1" y="5" width="14" height="14" fill="#e6c35a" stroke="#8a6a12"/><rect x="6" y="9" width="8" height="7" fill="#c5d8ec" stroke="#3d5f88"/><path d="M11 5 L15 1 L19 5 L15 9Z" fill="#f2c46a" stroke="#9a6a2b"/><circle cx="17" cy="13" r="3.5" fill="#f0a0a8"/></svg><svg style="left:238px;top:980px" width="22" height="22"><path d="M4 3 V17 M0.5 13 L4 18 L7.5 13" fill="none" stroke="#3d5f88" stroke-width="1.6"/><path d="M11 9 V3 C11 0 17 0 17 3 V9 M11 6 H17" fill="none" stroke="#777" stroke-width="1.5"/><path d="M11 12 H18 L11 19 H18" fill="none" stroke="#c89a22" stroke-width="2"/></svg><svg style="left:273px;top:981px" width="24" height="20"><path d="M5 2 V16 M1.5 12 L5 17 L8.5 12" fill="none" stroke="#3d5f88" stroke-width="1.6"/><path d="M11 3 H21 M11 6.5 H21 M11 10 H21 M11 13.5 H21 M11 17 H21" stroke="#444" stroke-width="1.8"/></svg><div style="position:absolute;left:316px;top:132px;width:1600px;height:749px;background:#fff;border:1px solid #8e8e8e"></div><div style="position:absolute;left:316px;top:108px;width:212px;height:25px;background:linear-gradient(#d9e6f4,#f4f8fc);border:1px solid #8e8e8e;border-bottom:none"></div><svg style="left:321px;top:112px" width="18" height="19"><path d="M1 1 H11 L15 5 V17.5 H1 Z" fill="#eef0f5" stroke="#8d939c" stroke-width="1.2"/><circle cx="6" cy="11.5" r="3" fill="#e88b8b" stroke="#8b4a4a" stroke-width="0.8"/><circle cx="10.5" cy="11.5" r="3" fill="#8fb6e3" stroke="#3d5f88" stroke-width="0.8"/><path d="M8 5 L11 9 H5 Z" fill="#f0b34a"/></svg><div class="t " style="left:344.7px;top:115.86px;font-size:12.8px;color:#111;letter-spacing:0.43px">Java_Swing_Library.java</div><svg style="left:513px;top:117px" width="10" height="10"><path d="M0.5 0.5 L8.5 8.5 M8.5 0.5 L0.5 8.5" stroke="#444" stroke-width="1.3"/></svg><svg style="left:1835px;top:112px" width="80" height="14"><path d="M6 0.5 V11 L0.5 5.75 Z" fill="#c6c6c6"/><path d="M23 0.5 V11 L28.5 5.75 Z" fill="#c6c6c6"/><path d="M42 2.5 H55 L48.5 8.5 Z" fill="#444"/><rect x="66.5" y="1.5" width="9.5" height="8.5" fill="none" stroke="#222" stroke-width="1.3"/><rect x="66.5" y="1.5" width="9.5" height="2" fill="#222"/></svg><div style="position:absolute;left:317px;top:133px;width:1598px;height:33px;background:#efefef"></div><div style="position:absolute;left:317px;top:166px;width:1598px;height:1px;background:#a0a0a0"></div><div style="position:absolute;left:317px;top:136px;width:64px;height:28px;background:#c8dcf0"></div><div class="t " style="left:327.8px;top:144.24px;font-size:13.3px;color:#111;letter-spacing:0.05px">Source</div><div class="t " style="left:391.4px;top:144.24px;font-size:13.3px;color:#111;letter-spacing:0px">History</div><div style="position:absolute;left:448px;top:138px;width:1px;height:24px;background:#9d9d9d"></div><div style="position:absolute;left:565px;top:138px;width:1px;height:24px;background:#9d9d9d"></div><div style="position:absolute;left:716px;top:138px;width:1px;height:24px;background:#9d9d9d"></div><div style="position:absolute;left:808px;top:138px;width:1px;height:24px;background:#9d9d9d"></div><div style="position:absolute;left:934px;top:138px;width:1px;height:24px;background:#9d9d9d"></div><svg style="left:455px;top:139px" width="26" height="24"><path d="M2 3 H6 M4 3 V20 M2 20 H6" stroke="#333" stroke-width="1.4"/><rect x="1" y="2" width="20" height="19" fill="none" stroke="#555"/><path d="M8 11 L14 5 V8 H20 V14 H14 V17 Z" fill="#f2b84a" stroke="#9a6a12"/></svg><svg style="left:484px;top:139px" width="26" height="24"><rect x="1" y="2" width="19" height="19" fill="#b7b7b7" stroke="#a0a0a0"/><path d="M10 13 H20 V20 H10Z" fill="#c7c7c7"/></svg><svg style="left:527px;top:139px" width="26" height="24"><rect x="1" y="2" width="19" height="19" fill="#b7b7b7" stroke="#a0a0a0"/><path d="M5 14 L10 9 L15 14Z" fill="#c7c7c7"/></svg><svg style="left:513px;top:151px" width="6" height="4"><path d="M0 0 H5 L2.5 3Z" fill="#c6c6c6"/></svg><svg style="left:553px;top:151px" width="6" height="4"><path d="M0 0 H5 L2.5 3Z" fill="#c6c6c6"/></svg><svg style="left:572px;top:139px" width="26" height="24"><rect x="1" y="2" width="14" height="7" fill="#f2c46a" stroke="#9a6a2b"/><circle cx="10" cy="12" r="5.5" fill="#cfe3f7" stroke="#333" stroke-width="1.6"/><path d="M14 16 L19 21" stroke="#222" stroke-width="2.6"/></svg><svg style="left:601px;top:139px" width="26" height="24"><rect x="1" y="2" width="14" height="7" fill="#f2c46a" stroke="#9a6a2b"/><path d="M3 14 L9 8 V11 H19 V17 H9 V20 Z" fill="#8fd0ef" stroke="#2e6a9a"/></svg><svg style="left:630px;top:139px" width="26" height="24"><rect x="5" y="2" width="14" height="7" fill="#f2c46a" stroke="#9a6a2b"/><path d="M19 14 L13 8 V11 H3 V17 H13 V20 Z" fill="#8fd0ef" stroke="#2e6a9a"/></svg><svg style="left:659px;top:139px" width="26" height="24"><rect x="1" y="2" width="14" height="8" fill="#f2c46a" stroke="#9a6a2b"/><rect x="5" y="13" width="15" height="8" fill="#a8a8a8" stroke="#555"/></svg><svg style="left:688px;top:139px" width="26" height="24"><rect x="1.5" y="2.5" width="15" height="15" fill="none" stroke="#333" stroke-dasharray="2 1.5"/><path d="M12 10 L20 17 L15 17 L14 21 Z" fill="#555"/></svg><svg style="left:722px;top:139px" width="26" height="24"><path d="M10 4 L17 4 L20 8 L17 12 L10 12 Z" fill="#8fd0ef" stroke="#2e6a9a"/><path d="M8 8 L14 14 H11 V21 H5 V14 H2 Z" fill="#f2b84a" stroke="#9a6a12"/></svg><svg style="left:751px;top:139px" width="26" height="24"><path d="M8 2 V9 H11 L5 16 L-1 9 H2 V2 Z" transform="translate(3,0)" fill="#f2b84a" stroke="#9a6a12"/><path d="M10 12 L17 12 L20 16 L17 20 L10 20 Z" fill="#8fd0ef" stroke="#2e6a9a"/></svg><svg style="left:780px;top:139px" width="26" height="24"><path d="M2 2 L9 2 L12 6 L9 10 L2 10 Z" fill="#9fd4ea" stroke="#5a8aa0"/><path d="M8 12 L15 12 L18 16 L15 20 L8 20 Z" fill="#eee" stroke="#999"/><path d="M4 11 L6 17" stroke="#333" stroke-dasharray="1 1.5"/></svg><svg style="left:815px;top:139px" width="26" height="24"><path d="M1 8 L7 2 V5 H14 V11 H7 V14 Z" fill="#bfe6f2" stroke="#2e6a9a"/><path d="M14 3 H20 M14 6 H20 M14 9 H20 M14 12 H20" stroke="#444" stroke-width="1.6"/><path d="M1 17 H20 M1 20 H20" stroke="#444" stroke-width="1.8"/></svg><svg style="left:844px;top:139px" width="26" height="24"><path d="M14 8 L8 2 V5 H1 V11 H8 V14 Z" fill="#bfe6f2" stroke="#2e6a9a"/><path d="M14 3 H20 M14 6 H20 M14 9 H20 M14 12 H20" stroke="#444" stroke-width="1.6"/><path d="M1 17 H20 M1 20 H20" stroke="#444" stroke-width="1.8"/></svg><svg style="left:878px;top:139px" width="26" height="24"><circle cx="10" cy="12" r="7.5" fill="#e8412e" stroke="#b8321f"/></svg><svg style="left:907px;top:139px" width="26" height="24"><rect x="3.5" y="4.5" width="15" height="15" fill="#f4f4f4" stroke="#b5b5b5" stroke-width="1.2"/></svg><svg style="left:941px;top:139px" width="26" height="24"><path d="M3 11 L7 3 H10 L6 11 H9 L13 3" stroke="#55a030" stroke-width="2.2" fill="none"/><path d="M14 6 H20 M14 9 H20 M14 12 H20" stroke="#555" stroke-width="1.5"/><path d="M1 15 H20 M1 18 H20 M1 21 H20" stroke="#444" stroke-width="1.8"/></svg><svg style="left:970px;top:139px" width="26" height="24"><path d="M14 7 H20 M14 10 H20 M14 13 H20" stroke="#333" stroke-width="1.8"/><path d="M1 16 H20 M1 19 H20 M1 22 H20" stroke="#333" stroke-width="1.9"/></svg><svg style="left:1895px;top:142px" width="14" height="14"><rect x="0.5" y="0.5" width="12" height="12" fill="#fff" stroke="#555"/><path d="M6.5 1 V12 M1 6.5 H12" stroke="#111" stroke-width="1.5"/></svg><div style="position:absolute;left:317px;top:167px;width:44px;height:694px;background:#e9e9e9"></div><div style="position:absolute;left:360px;top:167px;width:1px;height:694px;background:#dadada"></div><div style="position:absolute;left:397px;top:167px;width:1px;height:694px;background:#eeeeee"></div><div style="position:absolute;left:1197px;top:167px;width:1px;height:694px;background:#dcd6d8"></div><div style="position:absolute;left:400px;top:437.5px;width:1478px;height:22.5px;background:#e9eff8"></div><div style="position:absolute;left:1197px;top:437.5px;width:1px;height:22.5px;background:#e3b3c0"></div><div style="position:absolute;left:397px;top:437.5px;width:3px;height:21px;background:#000"></div><div style="position:absolute;left:437px;top:167px;width:1px;height:70px;background:#ececec"></div><div style="position:absolute;left:437px;top:280px;width:1px;height:67px;background:#ececec"></div><div style="position:absolute;left:437px;top:415px;width:1px;height:205px;background:#ececec"></div><div style="position:absolute;left:437px;top:685px;width:1px;height:175px;background:#ececec"></div><div style="position:absolute;left:477px;top:460px;width:1px;height:22px;background:#ececec"></div><div style="position:absolute;left:477px;top:550px;width:1px;height:22px;background:#ececec"></div><div style="position:absolute;left:477px;top:797px;width:1px;height:23px;background:#ececec"></div><div style="position:absolute;left:376px;top:167px;width:1px;height:56px;background:#777"></div><div style="position:absolute;left:376px;top:223px;width:7px;height:1px;background:#777"></div><svg style="left:370px;top:262px" width="13" height="14"><rect x="0.5" y="0.5" width="12" height="12.5" fill="#fff" stroke="#666"/><path d="M3.5 6.75 H9.5" stroke="#444" stroke-width="1"/></svg><div style="position:absolute;left:376px;top:276px;width:1px;height:82px;background:#777"></div><div style="position:absolute;left:376px;top:358px;width:7px;height:1px;background:#777"></div><svg style="left:370px;top:397px" width="13" height="14"><rect x="0.5" y="0.5" width="12" height="12.5" fill="#fff" stroke="#666"/><path d="M3.5 6.75 H9.5" stroke="#444" stroke-width="1"/></svg><div style="position:absolute;left:376px;top:411px;width:1px;height:217px;background:#777"></div><div style="position:absolute;left:376px;top:628px;width:7px;height:1px;background:#777"></div><svg style="left:370px;top:667px" width="13" height="14"><rect x="0.5" y="0.5" width="12" height="12.5" fill="#fff" stroke="#666"/><path d="M3.5 6.75 H9.5" stroke="#444" stroke-width="1"/></svg><div style="position:absolute;left:376px;top:681px;width:1px;height:180px;background:#777"></div><svg style="left:345px;top:419px" width="16" height="17"><path d="M6 1 C1 1 0 8 3.5 10 V13 H8.5 V10 C12 8 11 1 6 1Z" fill="#f4e23a" stroke="#8a7a12" stroke-width="1"/><rect x="8" y="9" width="7" height="7" fill="#f4d21a" stroke="#333" stroke-width="0.8"/></svg><div style="position:absolute;left:1878px;top:167px;width:37px;height:694px;background:#f0f0f0"></div><div style="position:absolute;left:1878px;top:482px;width:19px;height:61px;background:#c8c8c8"></div><svg style="left:1882px;top:174px" width="11" height="7"><path d="M0.8 6 L5.5 1 L10.2 6" fill="none" stroke="#444" stroke-width="1.8"/></svg><svg style="left:1882px;top:845px" width="11" height="7"><path d="M0.8 1 L5.5 6 L10.2 1" fill="none" stroke="#444" stroke-width="1.8"/></svg><div style="position:absolute;left:1901px;top:176px;width:8px;height:10px;background:#e5a817"></div><div style="position:absolute;left:1900px;top:206px;width:13px;height:3px;background:#a8b07a"></div><div style="position:absolute;left:1900px;top:467px;width:13px;height:4px;background:#e8b420"></div><div style="position:absolute;left:1900px;top:507px;width:13px;height:4px;background:#c8c030"></div><div style="position:absolute;left:317px;top:860.5px;width:1598px;height:20px;background:#efefef"></div><div style="position:absolute;left:418px;top:861.5px;width:787px;height:18.5px;background:#cdcdcd"></div><div style="position:absolute;left:316px;top:880.6px;width:1600px;height:1px;background:#8e8e8e"></div><svg style="left:404px;top:866px" width="7" height="11"><path d="M5.5 0.8 L1 5 L5.5 9.2" fill="none" stroke="#444" stroke-width="1.8"/></svg><svg style="left:1864px;top:866px" width="7" height="11"><path d="M1 0.8 L5.5 5 L1 9.2" fill="none" stroke="#444" stroke-width="1.8"/></svg><div style="position:absolute;left:848px;top:433.5px;width:170px;height:2px;background:#e6ee86"></div><div style="position:absolute;left:317px;top:167px;width:1561px;height:693.5px;overflow:hidden"><div class="t mono" style="left:1px;top:7.8999999999999995px;width:40px;text-align:right;font-size:13px;letter-spacing:2.2px;color:#222">151</div><div class="t mono" style="left:80.0px;top:7.6px;font-size:13px;letter-spacing:0.3959px;color:#222;transform:scaleX(1.22);transform-origin:0 0">        }</div><div class="t mono" style="left:1px;top:30.400000000000002px;width:40px;text-align:right;font-size:13px;letter-spacing:2.2px;color:#222">152</div><div class="t mono" style="left:80.0px;top:30.1px;font-size:13px;letter-spacing:0.3959px;color:#222;transform:scaleX(1.22);transform-origin:0 0">        <span style="color:#2b2b92">return</span> tmpJList;</div><div class="t mono" style="left:1px;top:52.9px;width:40px;text-align:right;font-size:13px;letter-spacing:2.2px;color:#222">153</div><div class="t mono" style="left:80.0px;top:52.6px;font-size:13px;letter-spacing:0.3959px;color:#222;transform:scaleX(1.22);transform-origin:0 0">    } <span style="color:#45a045">// end of setupJListAndGet</span></div><div class="t mono" style="left:1px;top:75.39999999999999px;width:40px;text-align:right;font-size:13px;letter-spacing:2.2px;color:#222">154</div><div class="t mono" style="left:80.0px;top:75.1px;font-size:13px;letter-spacing:0.3959px;color:#222;transform:scaleX(1.22);transform-origin:0 0"></div><div class="t mono" style="left:1px;top:97.89999999999999px;width:40px;text-align:right;font-size:13px;letter-spacing:2.2px;color:#222">155</div><div class="t mono" style="left:80.0px;top:97.6px;font-size:13px;letter-spacing:0.3959px;color:#222;transform:scaleX(1.22);transform-origin:0 0">    <span style="color:#2b2b92">public</span> <span style="color:#2b2b92">static</span> JScrollPane <b><i>setupScrollableJListAndGet</i></b>(JList jlist, <span style="color:#2b2b92">int</span> xpos, <span style="color:#2b2b92">int</span> ypos, <span style="color:#2b2b92">int</span> width, <span style="color:#2b2b92">int</span> height) {</div><div class="t mono" style="left:1px;top:120.39999999999999px;width:40px;text-align:right;font-size:13px;letter-spacing:2.2px;color:#222">156</div><div class="t mono" style="left:80.0px;top:120.1px;font-size:13px;letter-spacing:0.3959px;color:#222;transform:scaleX(1.22);transform-origin:0 0">        JScrollPane tmpJSP = <span style="color:#2b2b92">new</span> JScrollPane(jlist);</div><div class="t mono" style="left:1px;top:142.9px;width:40px;text-align:right;font-size:13px;letter-spacing:2.2px;color:#222">157</div><div class="t mono" style="left:80.0px;top:142.6px;font-size:13px;letter-spacing:0.3959px;color:#222;transform:scaleX(1.22);transform-origin:0 0">        tmpJSP.setBounds(xpos, ypos, width, height);</div><div class="t mono" style="left:1px;top:165.4px;width:40px;text-align:right;font-size:13px;letter-spacing:2.2px;color:#222">158</div><div class="t mono" style="left:80.0px;top:165.1px;font-size:13px;letter-spacing:0.3959px;color:#222;transform:scaleX(1.22);transform-origin:0 0">        <span style="color:#2b2b92">return</span> tmpJSP;</div><div class="t mono" style="left:1px;top:187.9px;width:40px;text-align:right;font-size:13px;letter-spacing:2.2px;color:#222">159</div><div class="t mono" style="left:80.0px;top:187.6px;font-size:13px;letter-spacing:0.3959px;color:#222;transform:scaleX(1.22);transform-origin:0 0">    } <span style="color:#45a045">// end of setupScrollableJListAndGet</span></div><div class="t mono" style="left:1px;top:210.4px;width:40px;text-align:right;font-size:13px;letter-spacing:2.2px;color:#222">160</div><div class="t mono" style="left:80.0px;top:210.1px;font-size:13px;letter-spacing:0.3959px;color:#222;transform:scaleX(1.22);transform-origin:0 0"></div><div class="t mono" style="left:1px;top:232.9px;width:40px;text-align:right;font-size:13px;letter-spacing:2.2px;color:#222">161</div><div class="t mono" style="left:80.0px;top:232.6px;font-size:13px;letter-spacing:0.3959px;color:#222;transform:scaleX(1.22);transform-origin:0 0">    <span style="color:#2b2b92">public</span> <span style="color:#2b2b92">static</span> JComboBox&lt;String&gt; <b><i>setupJComboBoxAndGet</i></b>(ComboBoxModel&lt;String&gt; cbm, <span style="color:#2b2b92">int</span> initialSelectedIndex, Object actLisObj, <span style="color:#2b2b92">boolean</span> setBoundsFlag</div><div class="t mono" style="left:80.0px;top:255.1px;font-size:13px;letter-spacing:0.3959px;color:#222;transform:scaleX(1.22);transform-origin:0 0">        JComboBox&lt;String&gt; tmpJComboBox = <span style="color:#2b2b92">new</span> JComboBox&lt;String&gt;(cbm);</div><div class="t mono" style="left:1px;top:277.90000000000003px;width:40px;text-align:right;font-size:13px;letter-spacing:2.2px;color:#222">163</div><div class="t mono" style="left:80.0px;top:277.6px;font-size:13px;letter-spacing:0.3959px;color:#222;transform:scaleX(1.22);transform-origin:0 0">        <span style="color:#2b2b92">if</span> (initialSelectedIndex &gt;= 0) {</div><div class="t mono" style="left:1px;top:300.40000000000003px;width:40px;text-align:right;font-size:13px;letter-spacing:2.2px;color:#222">164</div><div class="t mono" style="left:80.0px;top:300.1px;font-size:13px;letter-spacing:0.3959px;color:#222;transform:scaleX(1.22);transform-origin:0 0">            tmpJComboBox.setSelectedIndex(initialSelectedIndex);</div><div class="t mono" style="left:1px;top:322.90000000000003px;width:40px;text-align:right;font-size:13px;letter-spacing:2.2px;color:#222">165</div><div class="t mono" style="left:80.0px;top:322.6px;font-size:13px;letter-spacing:0.3959px;color:#222;transform:scaleX(1.22);transform-origin:0 0">        }</div><div class="t mono" style="left:1px;top:345.40000000000003px;width:40px;text-align:right;font-size:13px;letter-spacing:2.2px;color:#222">166</div><div class="t mono" style="left:80.0px;top:345.1px;font-size:13px;letter-spacing:0.3959px;color:#222;transform:scaleX(1.22);transform-origin:0 0">        tmpJComboBox.addActionListener((ActionListener) actLisObj);</div><div class="t mono" style="left:1px;top:367.90000000000003px;width:40px;text-align:right;font-size:13px;letter-spacing:2.2px;color:#222">167</div><div class="t mono" style="left:80.0px;top:367.6px;font-size:13px;letter-spacing:0.3959px;color:#222;transform:scaleX(1.22);transform-origin:0 0">        <span style="color:#2b2b92">if</span> (setBoundsFlag == <span style="color:#2b2b92">true</span>) {</div><div class="t mono" style="left:1px;top:390.40000000000003px;width:40px;text-align:right;font-size:13px;letter-spacing:2.2px;color:#222">168</div><div class="t mono" style="left:80.0px;top:390.1px;font-size:13px;letter-spacing:0.3959px;color:#222;transform:scaleX(1.22);transform-origin:0 0">            tmpJComboBox.setBounds(xpos, ypos, width, height);</div><div class="t mono" style="left:1px;top:412.90000000000003px;width:40px;text-align:right;font-size:13px;letter-spacing:2.2px;color:#222">169</div><div class="t mono" style="left:80.0px;top:412.6px;font-size:13px;letter-spacing:0.3959px;color:#222;transform:scaleX(1.22);transform-origin:0 0">        }</div><div class="t mono" style="left:1px;top:435.40000000000003px;width:40px;text-align:right;font-size:13px;letter-spacing:2.2px;color:#222">170</div><div class="t mono" style="left:80.0px;top:435.1px;font-size:13px;letter-spacing:0.3959px;color:#222;transform:scaleX(1.22);transform-origin:0 0">        <span style="color:#2b2b92">return</span> tmpJComboBox;</div><div class="t mono" style="left:1px;top:457.90000000000003px;width:40px;text-align:right;font-size:13px;letter-spacing:2.2px;color:#222">171</div><div class="t mono" style="left:80.0px;top:457.6px;font-size:13px;letter-spacing:0.3959px;color:#222;transform:scaleX(1.22);transform-origin:0 0">    } <span style="color:#45a045">// end of setupJComboBoxAndGet</span></div><div class="t mono" style="left:1px;top:480.40000000000003px;width:40px;text-align:right;font-size:13px;letter-spacing:2.2px;color:#222">172</div><div class="t mono" style="left:80.0px;top:480.1px;font-size:13px;letter-spacing:0.3959px;color:#222;transform:scaleX(1.22);transform-origin:0 0"></div><div class="t mono" style="left:1px;top:502.90000000000003px;width:40px;text-align:right;font-size:13px;letter-spacing:2.2px;color:#222">173</div><div class="t mono" style="left:80.0px;top:502.6px;font-size:13px;letter-spacing:0.3959px;color:#222;transform:scaleX(1.22);transform-origin:0 0">    <span style="color:#2b2b92">public</span> <span style="color:#2b2b92">static</span> JProgressBar <b><i>setupJProgressBarAndGet</i></b>(<span style="color:#2b2b92">int</span> orientation, <span style="color:#2b2b92">int</span> min, <span style="color:#2b2b92">int</span> max, <span style="color:#2b2b92">int</span> initialVal, <span style="color:#2b2b92">boolean</span> borderPaintedFlag, <span style="color:#2b2b92">boolean</span> stringPaintedFlag</div><div class="t mono" style="left:1px;top:525.4px;width:40px;text-align:right;font-size:13px;letter-spacing:2.2px;color:#222">174</div><div class="t mono" style="left:80.0px;top:525.1px;font-size:13px;letter-spacing:0.3959px;color:#222;transform:scaleX(1.22);transform-origin:0 0">        JProgressBar tmpJPB = <span style="color:#2b2b92">new</span> JProgressBar(orientation, min, max);</div><div class="t mono" style="left:1px;top:547.9px;width:40px;text-align:right;font-size:13px;letter-spacing:2.2px;color:#222">175</div><div class="t mono" style="left:80.0px;top:547.6px;font-size:13px;letter-spacing:0.3959px;color:#222;transform:scaleX(1.22);transform-origin:0 0">        tmpJPB.setValue(initialVal);</div><div class="t mono" style="left:1px;top:570.4px;width:40px;text-align:right;font-size:13px;letter-spacing:2.2px;color:#222">176</div><div class="t mono" style="left:80.0px;top:570.1px;font-size:13px;letter-spacing:0.3959px;color:#222;transform:scaleX(1.22);transform-origin:0 0">        tmpJPB.setBorderPainted(borderPaintedFlag);</div><div class="t mono" style="left:1px;top:592.9px;width:40px;text-align:right;font-size:13px;letter-spacing:2.2px;color:#222">177</div><div class="t mono" style="left:80.0px;top:592.6px;font-size:13px;letter-spacing:0.3959px;color:#222;transform:scaleX(1.22);transform-origin:0 0">        tmpJPB.setStringPainted(stringPaintedFlag);</div><div class="t mono" style="left:1px;top:615.4px;width:40px;text-align:right;font-size:13px;letter-spacing:2.2px;color:#222">178</div><div class="t mono" style="left:80.0px;top:615.1px;font-size:13px;letter-spacing:0.3959px;color:#222;transform:scaleX(1.22);transform-origin:0 0">        <span style="color:#2b2b92">if</span> (setBoundsFlag == <span style="color:#2b2b92">true</span>) {</div><div class="t mono" style="left:1px;top:637.9px;width:40px;text-align:right;font-size:13px;letter-spacing:2.2px;color:#222">179</div><div class="t mono" style="left:80.0px;top:637.6px;font-size:13px;letter-spacing:0.3959px;color:#222;transform:scaleX(1.22);transform-origin:0 0">            tmpJPB.setBounds(xpos, ypos, width, height);</div><div class="t mono" style="left:1px;top:660.4px;width:40px;text-align:right;font-size:13px;letter-spacing:2.2px;color:#222">180</div><div class="t mono" style="left:80.0px;top:660.1px;font-size:13px;letter-spacing:0.3959px;color:#222;transform:scaleX(1.22);transform-origin:0 0">        }</div><div class="t mono" style="left:1px;top:682.9px;width:40px;text-align:right;font-size:13px;letter-spacing:2.2px;color:#222">181</div><div class="t mono" style="left:80.0px;top:682.6px;font-size:13px;letter-spacing:0.3959px;color:#222;transform:scaleX(1.22);transform-origin:0 0">        <span style="color:#2b2b92">return</span> tmpJPB;</div></div><div style="position:absolute;left:316px;top:887px;width:1600px;height:125px;background:#fff;border:1px solid #8e8e8e"></div><div style="position:absolute;left:317px;top:888.5px;width:1598px;height:23.5px;background:linear-gradient(#f1f1f1,#e3e3e3)"></div><div style="position:absolute;left:317px;top:888.5px;width:136px;height:23.5px;background:linear-gradient(#ececec,#e2e2e2)"></div><div style="position:absolute;left:453px;top:888.5px;width:312px;height:23.5px;background:#fff"></div><div style="position:absolute;left:453px;top:888.5px;width:1px;height:23.5px;background:#b0b0b0"></div><div style="position:absolute;left:765px;top:888.5px;width:1px;height:23.5px;background:#b0b0b0"></div><div style="position:absolute;left:317px;top:912px;width:1598px;height:1px;background:#a0a0a0"></div><div class="t " style="left:323.5px;top:894.65px;font-size:14px;font-weight:bold;color:#111;letter-spacing:0.1px">Search Results</div><div class="t " style="left:460px;top:894.65px;font-size:14px;font-weight:bold;color:#111;letter-spacing:0.24px">Output - Java_Swing_Library (clean,jar)</div><svg style="left:747px;top:896px" width="10" height="10"><path d="M0.5 0.5 L8.5 8.5 M8.5 0.5 L0.5 8.5" stroke="#444" stroke-width="1.3"/></svg><div style="position:absolute;left:1896px;top:900px;width:11px;height:2px;background:#333"></div><div style="position:absolute;left:317px;top:913px;width:30px;height:98px;background:#f0f0f0"></div><div style="position:absolute;left:347px;top:913px;width:1px;height:98px;background:#c4c4c4"></div><svg style="left:320px;top:918px" width="22" height="20"><path d="M1.5 1.5 L10 9.5 L1.5 17.5 Z" fill="#b9e98a" stroke="#3a8a2a" stroke-width="1.3"/><path d="M9.5 1.5 L18 9.5 L9.5 17.5 Z" fill="#b9e98a" stroke="#3a8a2a" stroke-width="1.3"/></svg><svg style="left:320px;top:946px" width="22" height="20"><path d="M1.5 1.5 L10 9.5 L1.5 17.5 Z" fill="#e1e38a" stroke="#9a9a2a" stroke-width="1.3"/><path d="M9.5 1.5 L18 9.5 L9.5 17.5 Z" fill="#e1e38a" stroke="#9a9a2a" stroke-width="1.3"/></svg><div class="t " style="left:325px;top:973.30px;font-size:15px;color:#222">»</div><div class="t mono " style="left:371.5px;top:912.81px;font-size:12px;color:#222;letter-spacing:0.0715px;transform:scaleX(1.1);transform-origin:0 0">java -jar &quot;C:\Users\Amit\Downloads\programs\Java_Swing_Library\dist\Java_Swing_Library.jar&quot;</div><div class="t mono " style="left:371.5px;top:932.71px;font-size:12px;color:#8a8a8a;letter-spacing:0.0715px;transform:scaleX(1.1);transform-origin:0 0">deploy:</div><div class="t mono " style="left:371.5px;top:952.61px;font-size:12px;color:#8a8a8a;letter-spacing:0.0715px;transform:scaleX(1.1);transform-origin:0 0">jar:</div><div class="t mono " style="left:371.5px;top:972.51px;font-size:12px;color:#3b8a3b;letter-spacing:0.0715px;transform:scaleX(1.1);transform-origin:0 0">BUILD SUCCESSFUL (total time: 1 second)</div><div style="position:absolute;left:1893.5px;top:913px;width:21.5px;height:98px;background:#f0f0f0"></div><svg style="left:1898px;top:920px" width="11" height="7"><path d="M0.8 6 L5.5 1 L10.2 6" fill="none" stroke="#444" stroke-width="1.8"/></svg><svg style="left:1898px;top:995px" width="11" height="7"><path d="M0.8 1 L5.5 6 L10.2 1" fill="none" stroke="#444" stroke-width="1.8"/></svg><div style="position:absolute;left:1893px;top:978px;width:21px;height:12px;background:#d0d0d0"></div><div style="position:absolute;left:0px;top:1012px;width:1920px;height:30px;background:#eeeeee"></div><div style="position:absolute;left:1645px;top:1017px;width:1px;height:22px;background:#a8a8a8"></div><div style="position:absolute;left:1783px;top:1017px;width:1px;height:22px;background:#a8a8a8"></div><div style="position:absolute;left:1813px;top:1017px;width:1px;height:22px;background:#a8a8a8"></div><div class="t " style="left:1697px;top:1022.90px;font-size:13px;color:#111;letter-spacing:0.55px">163:1</div><div class="t " style="left:1790px;top:1022.90px;font-size:13px;color:#111;letter-spacing:-0.3px">INS</div><div class="t " style="left:1817px;top:1022.90px;font-size:13px;color:#111;letter-spacing:0.28px">Windows (CR...</div><div style="position:absolute;left:0px;top:1042px;width:1920px;height:38px;background:#1e2b31"></div><div style="position:absolute;left:942px;top:1042px;width:200px;height:38px;background:#454f55"></div><div style="position:absolute;left:99px;top:1077px;width:190px;height:3px;background:#76b9ed"></div><div style="position:absolute;left:346px;top:1077px;width:190px;height:3px;background:#76b9ed"></div><div style="position:absolute;left:546px;top:1077px;width:190px;height:3px;background:#76b9ed"></div><div style="position:absolute;left:746px;top:1077px;width:190px;height:3px;background:#76b9ed"></div><div style="position:absolute;left:942px;top:1077px;width:200px;height:3px;background:#76b9ed"></div><div style="position:absolute;left:1148px;top:1077px;width:190px;height:3px;background:#76b9ed"></div><svg style="left:12px;top:1051px" width="21" height="21"><path d="M0 3 L8.5 1.8 V9.8 H0Z M9.8 1.6 L20 0 V9.8 H9.8Z M0 11 H8.5 V19 L0 17.8Z M9.8 11 H20 V20.5 L9.8 19Z" fill="#fff"/></svg><svg style="left:56px;top:1050px" width="23" height="23"><circle cx="13.5" cy="8.5" r="7" fill="none" stroke="#fff" stroke-width="1.6"/><path d="M8.5 13.5 L1.5 20.5" stroke="#fff" stroke-width="1.8"/></svg><svg style="left:104px;top:1052px" width="20" height="20"><circle cx="9.5" cy="9.5" r="9" fill="#db4437"/><path d="M9.5 9.5 L1.5 14 A9 9 0 0 0 13 18.3Z" fill="#0f9d58"/><path d="M9.5 9.5 L13 18.3 A9 9 0 0 0 18.5 9.5 Z" fill="#f4b400"/><circle cx="9.5" cy="9.5" r="4.2" fill="#fff"/><circle cx="9.5" cy="9.5" r="3.2" fill="#4285f4"/></svg><div class="t " style="left:128px;top:1055.58px;font-size:14.2px;color:#fff;letter-spacing:0px">Examples of many Jav...</div><svg style="left:306px;top:1049px" width="22" height="22"><circle cx="11" cy="12" r="9.5" fill="#ff7139"/><circle cx="11" cy="12" r="5.5" fill="#6b2fbf"/><path d="M3 6 C6 0 14 1 16 4 C12 3 8 5 7 8 Z" fill="#ffbd2e"/></svg><svg style="left:354px;top:1053px" width="14" height="18"><path d="M1 3 L8 1 L11 2 V15 L3 17 L1 16 Z" fill="#f3d27a"/><path d="M1 3 L8 1 V14 L1 16Z" fill="#e9b949"/></svg><div class="t " style="left:375px;top:1055.58px;font-size:14.2px;color:#fff;letter-spacing:0px">src</div><svg style="left:554px;top:1053px" width="14" height="18"><path d="M1 3 L8 1 L11 2 V15 L3 17 L1 16 Z" fill="#f3d27a"/><path d="M1 3 L8 1 V14 L1 16Z" fill="#e9b949"/></svg><div class="t " style="left:575px;top:1055.58px;font-size:14.2px;color:#fff;letter-spacing:0px">backups</div><svg style="left:753px;top:1053px" width="14" height="18"><path d="M1 3 L8 1 L11 2 V15 L3 17 L1 16 Z" fill="#f3d27a"/><path d="M1 3 L8 1 V14 L1 16Z" fill="#e9b949"/></svg><div class="t " style="left:775px;top:1055.58px;font-size:14.2px;color:#fff;letter-spacing:0px">to_upload</div><svg style="left:954px;top:1053px" width="16" height="17"><path d="M8 1 L14.5 4.5 V12.5 L8 16 L1.5 12.5 V4.5 Z" fill="#2f7fd0"/><path d="M8 1 L14.5 4.5 L8 8 L1.5 4.5Z" fill="#9bd13a"/><path d="M1.5 4.5 L8 8 V16 L1.5 12.5Z" fill="#d0225a"/></svg><div class="t " style="left:975px;top:1055.58px;font-size:14.2px;color:#fff;letter-spacing:0px">Java_Swing_Library - ...</div><svg style="left:1151px;top:1052px" width="20" height="19"><ellipse cx="10" cy="10" rx="9" ry="7" fill="#c8d3de"/><circle cx="6" cy="8" r="2" fill="#e84a4a"/><circle cx="11" cy="6" r="2" fill="#3a8ae8"/><circle cx="14" cy="10" r="2" fill="#f4c430"/><path d="M13 17 L19 3" stroke="#d49a3a" stroke-width="2"/></svg><div class="t " style="left:1177px;top:1055.58px;font-size:14.2px;color:#fff;letter-spacing:0px">Screenshot2.jpg - Paint</div><svg style="left:1617px;top:1054px" width="18" height="11"><path d="M1 10 L8.5 2 L16 10" fill="none" stroke="#fff" stroke-width="1.5"/></svg><svg style="left:1644px;top:1052px" width="24" height="18"><rect x="1" y="6" width="20" height="10" fill="none" stroke="#fff" stroke-width="1.4"/><rect x="3" y="8" width="16" height="6" fill="#fff"/><rect x="21" y="9" width="2" height="4" fill="#fff"/><path d="M5 1 V6 M4 3 H6" stroke="#fff" stroke-width="1.4"/></svg><svg style="left:1677px;top:1052px" width="20" height="18"><path d="M2 16 A14 14 0 0 1 16 2 M5 16 A11 11 0 0 1 16 5 M8 16 A8 8 0 0 1 16 8 M11 16 A5 5 0 0 1 16 11" fill="none" stroke="#fff" stroke-width="1.2"/><circle cx="15" cy="15" r="2" fill="#fff"/></svg><svg style="left:1704px;top:1052px" width="24" height="18"><path d="M2 6 H5 L10 2 V16 L5 12 H2Z" fill="none" stroke="#fff" stroke-width="1.3"/><path d="M14 6 L20 12 M20 6 L14 12" stroke="#fff" stroke-width="1.3"/></svg><div class="t " style="left:1738px;top:1055.58px;font-size:14.2px;color:#fff">ENG</div><div class="t " style="left:1784px;top:1055.58px;font-size:14.2px;color:#fff">03:17 PM</div><svg style="left:1867px;top:1051px" width="24" height="21"><path d="M1.5 1.5 H21.5 V15.5 H10 L5 19.5 V15.5 H1.5Z" fill="none" stroke="#fff" stroke-width="1.3"/></svg><div style="position:absolute;left:1919px;top:29px;width:1px;height:1013px;background:#000"></div><div style="position:absolute;left:1914px;top:1042px;width:1px;height:38px;background:#5d6a70"></div></body></html>
